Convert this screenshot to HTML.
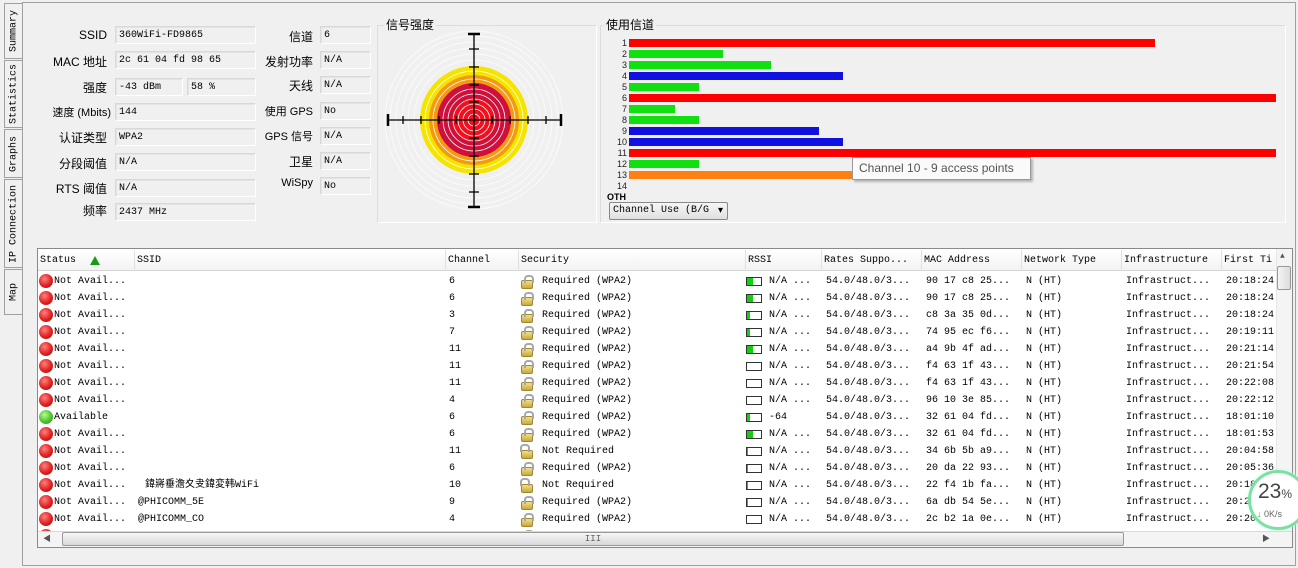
<!DOCTYPE html>
<html><head><meta charset="utf-8"><style>
*{box-sizing:border-box;margin:0;padding:0}
body{width:1298px;height:568px;background:#f0f0f0;position:relative;overflow:hidden;font-family:"Liberation Mono","Noto Sans CJK SC",monospace;font-size:10px;color:#000}
.a{position:absolute}
.tab{position:absolute;left:4px;width:18px;border:1px solid #a0a0a0;border-right:none;background:#f0f0f0}
.tab span{position:absolute;left:50%;top:50%;transform:translate(-50%,-50%) rotate(-90deg);white-space:nowrap;font-size:10px}
.lbl{position:absolute;text-align:right;font-family:"Liberation Sans","Noto Sans CJK SC",sans-serif;font-size:12px;white-space:nowrap}
.fld{position:absolute;height:18px;border:1px solid #fff;border-top-color:#d8d8d8;border-left-color:#d8d8d8;background:#f0f0f0;padding:3px 3px;font-size:10px;line-height:12px;box-shadow:inset 1px 1px 0 #e4e4e4}
.bar{position:absolute;left:629px;height:8px}
.cn{position:absolute;width:24px;text-align:right;font-family:"Liberation Sans",sans-serif;font-size:9px;color:#222}
.hdr{position:absolute;top:250px;height:21px;line-height:21px;font-size:10px;border-right:1px solid #e0e0e0;padding-left:2px;white-space:nowrap}
.row{position:absolute;left:38px;width:1238px;height:17px;font-size:10px;line-height:17px}
.row div{position:absolute;top:0;white-space:nowrap}
.row .dot{width:14px;height:14px;border-radius:50%;top:1px;left:1px;background:radial-gradient(circle at 40% 35%,#ff8080,#e02020 55%,#a01010)}
.row .g{background:radial-gradient(circle at 40% 35%,#b0ff90,#50c030 55%,#309010)}
.row .lock{left:483px;top:7px;width:12px;height:9px;background:linear-gradient(#f4e08a,#c8a840);border:1px solid #a08830;border-radius:2px}
.row .lock::before{content:"";position:absolute;left:2px;top:-6px;width:6px;height:6px;border:2px solid #a8a8a8;border-bottom:none;border-radius:4px 4px 0 0}
.row .lock.o::before{left:-2px;top:-7px}
.row .rs{left:708px;top:4px;width:16px;height:9px;border:1px solid #333;background:#fff}
.rs i{position:absolute;left:0;top:0;bottom:0;background:#10d010}
</style></head><body>
<div class="a" style="left:22px;top:2px;width:1274px;height:564px;border:1px solid #a0a0a0"></div>
<div class="tab" style="top:3px;height:56px"><span>Summary</span></div>
<div class="tab" style="top:60px;height:68px"><span>Statistics</span></div>
<div class="tab" style="top:129px;height:49px"><span>Graphs</span></div>
<div class="tab" style="top:179px;height:89px"><span>IP Connection</span></div>
<div class="tab" style="top:269px;height:46px"><span>Map</span></div>

<div class="lbl" style="left:40px;width:67px;top:28px">SSID</div><div class="fld" style="left:115px;top:26px;width:141px">360WiFi-FD9865</div>
<div class="lbl" style="left:40px;width:67px;top:53px">MAC 地址</div><div class="fld" style="left:115px;top:51px;width:141px">2c 61 04 fd 98 65</div>
<div class="lbl" style="left:40px;width:67px;top:79px">强度</div><div class="fld" style="left:115px;top:78px;width:68px">-43 dBm</div><div class="fld" style="left:187px;top:78px;width:69px">58 %</div>
<div class="lbl" style="left:30px;width:81px;top:104px;font-size:11px">速度 (Mbits)</div><div class="fld" style="left:115px;top:103px;width:141px">144</div>
<div class="lbl" style="left:40px;width:67px;top:129px">认证类型</div><div class="fld" style="left:115px;top:128px;width:141px">WPA2</div>
<div class="lbl" style="left:40px;width:67px;top:155px">分段阈值</div><div class="fld" style="left:115px;top:153px;width:141px">N/A</div>
<div class="lbl" style="left:40px;width:67px;top:180px">RTS 阈值</div><div class="fld" style="left:115px;top:179px;width:141px">N/A</div>
<div class="lbl" style="left:40px;width:67px;top:202px">频率</div><div class="fld" style="left:115px;top:203px;width:141px">2437 MHz</div>

<div class="lbl" style="left:255px;width:58px;top:28px">信道</div><div class="fld" style="left:320px;top:26px;width:51px">6</div>
<div class="lbl" style="left:255px;width:58px;top:53px">发射功率</div><div class="fld" style="left:320px;top:51px;width:51px">N/A</div>
<div class="lbl" style="left:255px;width:58px;top:77px">天线</div><div class="fld" style="left:320px;top:76px;width:51px">N/A</div>
<div class="lbl" style="left:255px;width:58px;top:103px;font-size:11px">使用 GPS</div><div class="fld" style="left:320px;top:102px;width:51px">No</div>
<div class="lbl" style="left:255px;width:58px;top:128px;font-size:11px">GPS 信号</div><div class="fld" style="left:320px;top:127px;width:51px">N/A</div>
<div class="lbl" style="left:255px;width:58px;top:153px">卫星</div><div class="fld" style="left:320px;top:152px;width:51px">N/A</div>
<div class="lbl" style="left:255px;width:58px;top:177px;font-size:11px">WiSpy</div><div class="fld" style="left:320px;top:177px;width:51px">No</div>

<div class="a" style="left:377px;top:25px;width:220px;height:198px;border:1px solid #dcdcdc;border-right-color:#fff;border-bottom-color:#fff"></div>
<div class="a" style="left:384px;top:16px;background:#f0f0f0;padding:0 2px;font-family:'Liberation Sans','Noto Sans CJK SC',sans-serif;font-size:12px">信号强度</div>
<svg class="a" style="left:377px;top:25px" width="220" height="198" viewBox="377 25 220 198">
<g fill="none" stroke="#fafafa" stroke-width="1">
<circle cx="474" cy="120" r="60"/><circle cx="474" cy="120" r="66"/><circle cx="474" cy="120" r="72"/><circle cx="474" cy="120" r="78"/><circle cx="474" cy="120" r="84"/><circle cx="474" cy="120" r="89"/></g>
<circle cx="474" cy="120" r="54" fill="#f5e400"/>
<circle cx="474" cy="120" r="45" fill="#f59a10"/>
<circle cx="474" cy="120" r="37" fill="#d0103c"/>
<circle cx="474" cy="120" r="22" fill="#f01020"/>
<g fill="none" stroke="#fff" stroke-width="0.8">
<circle cx="474" cy="120" r="6"/><circle cx="474" cy="120" r="11"/><circle cx="474" cy="120" r="16"/><circle cx="474" cy="120" r="21"/><circle cx="474" cy="120" r="26"/><circle cx="474" cy="120" r="31"/><circle cx="474" cy="120" r="41"/><circle cx="474" cy="120" r="49"/></g>
<g stroke="#000" stroke-width="1.3">
<line x1="387" y1="120" x2="562" y2="120"/><line x1="474" y1="33" x2="474" y2="208"/>
<line x1="388" y1="114" x2="388" y2="126" stroke-width="2.5"/><line x1="561" y1="114" x2="561" y2="126" stroke-width="2.5"/>
<line x1="468" y1="34" x2="480" y2="34" stroke-width="2.5"/><line x1="468" y1="207" x2="480" y2="207" stroke-width="2.5"/>
<line x1="403" y1="116" x2="403" y2="124"/><line x1="421" y1="116" x2="421" y2="124"/><line x1="439" y1="116" x2="439" y2="124"/><line x1="456" y1="116" x2="456" y2="124"/>
<line x1="492" y1="116" x2="492" y2="124"/><line x1="510" y1="116" x2="510" y2="124"/><line x1="528" y1="116" x2="528" y2="124"/><line x1="546" y1="116" x2="546" y2="124"/>
<line x1="469" y1="49" x2="479" y2="49"/><line x1="469" y1="67" x2="479" y2="67"/><line x1="469" y1="85" x2="479" y2="85"/><line x1="469" y1="102" x2="479" y2="102"/>
<line x1="469" y1="138" x2="479" y2="138"/><line x1="469" y1="156" x2="479" y2="156"/><line x1="469" y1="174" x2="479" y2="174"/><line x1="469" y1="192" x2="479" y2="192"/>
</g></svg>

<div class="a" style="left:600px;top:25px;width:686px;height:198px;border:1px solid #dcdcdc;border-right-color:#fff;border-bottom-color:#fff"></div>
<div class="a" style="left:604px;top:16px;background:#f0f0f0;padding:0 2px;font-family:'Liberation Sans','Noto Sans CJK SC',sans-serif;font-size:12px">使用信道</div>
<div class="cn" style="left:603px;top:38px">1</div><div class="bar" style="top:39px;width:526px;background:#f00"></div>
<div class="cn" style="left:603px;top:49px">2</div><div class="bar" style="top:50px;width:94px;background:#10e010"></div>
<div class="cn" style="left:603px;top:60px">3</div><div class="bar" style="top:61px;width:142px;background:#10e010"></div>
<div class="cn" style="left:603px;top:71px">4</div><div class="bar" style="top:72px;width:214px;background:#1010e0"></div>
<div class="cn" style="left:603px;top:82px">5</div><div class="bar" style="top:83px;width:70px;background:#10e010"></div>
<div class="cn" style="left:603px;top:93px">6</div><div class="bar" style="top:94px;width:647px;background:#f00"></div>
<div class="cn" style="left:603px;top:104px">7</div><div class="bar" style="top:105px;width:46px;background:#10e010"></div>
<div class="cn" style="left:603px;top:115px">8</div><div class="bar" style="top:116px;width:70px;background:#10e010"></div>
<div class="cn" style="left:603px;top:126px">9</div><div class="bar" style="top:127px;width:190px;background:#1010e0"></div>
<div class="cn" style="left:603px;top:137px">10</div><div class="bar" style="top:138px;width:214px;background:#1010e0"></div>
<div class="cn" style="left:603px;top:148px">11</div><div class="bar" style="top:149px;width:647px;background:#f00"></div>
<div class="cn" style="left:603px;top:159px">12</div><div class="bar" style="top:160px;width:70px;background:#10e010"></div>
<div class="cn" style="left:603px;top:170px">13</div><div class="bar" style="top:171px;width:336px;background:#ff8010"></div>
<div class="cn" style="left:603px;top:181px">14</div>
<div class="a" style="left:607px;top:192px;font-family:'Liberation Sans',sans-serif;font-size:9px;font-weight:bold">OTH</div>
<div class="a" style="left:609px;top:202px;width:119px;height:18px;border:1px solid #888;border-radius:2px;background:linear-gradient(#f6f6f6,#e0e0e0);padding:2px 3px;font-size:10px;white-space:nowrap;overflow:hidden">Channel Use (B/G <span style="position:absolute;right:4px;top:2px">▾</span></div>
<div class="a" style="left:852px;top:157px;width:179px;height:23px;background:#fafafa;border:1px solid #999;box-shadow:2px 2px 2px rgba(0,0,0,.25);font-family:'Liberation Sans',sans-serif;font-size:12px;color:#555;line-height:21px;padding-left:6px">Channel 10 - 9 access points</div>

<div class="a" style="left:37px;top:248px;width:1256px;height:300px;border:1px solid #8a8a8a;background:#fff"></div>
<div class="a" style="left:38px;top:249px;width:1238px;height:22px;background:linear-gradient(#fff,#f3f3f3);border-bottom:1px solid #d5d5d5"></div>
<div class="hdr" style="left:38px;width:97px">Status</div>
<div class="a" style="left:90px;top:256px;width:0;height:0;border-left:5px solid transparent;border-right:5px solid transparent;border-bottom:9px solid #1a9a1a"></div>
<div class="hdr" style="left:135px;width:311px">SSID</div>
<div class="hdr" style="left:446px;width:73px">Channel</div>
<div class="hdr" style="left:519px;width:227px">Security</div>
<div class="hdr" style="left:746px;width:76px">RSSI</div>
<div class="hdr" style="left:822px;width:100px">Rates Suppo...</div>
<div class="hdr" style="left:922px;width:100px">MAC Address</div>
<div class="hdr" style="left:1022px;width:100px">Network Type</div>
<div class="hdr" style="left:1122px;width:100px">Infrastructure</div>
<div class="hdr" style="left:1222px;width:54px;overflow:hidden;border:none">First Ti</div>

<div class="a" style="left:38px;top:272px;width:1238px;height:259px;overflow:hidden">
<div style="position:relative;left:-38px;top:-272px">
<div class="row" style="top:273px"><div class="dot"></div><div style="left:16px">Not Avail...</div><div style="left:411px">6</div><div class="lock"></div><div style="left:504px">Required (WPA2)</div><div class="rs"><i style="width:6px"></i></div><div style="left:731px">N/A ...</div><div style="left:788px">54.0/48.0/3...</div><div style="left:888px">90 17 c8 25...</div><div style="left:988px">N (HT)</div><div style="left:1088px">Infrastruct...</div><div style="left:1188px">20:18:24</div></div>
<div class="row" style="top:290px"><div class="dot"></div><div style="left:16px">Not Avail...</div><div style="left:411px">6</div><div class="lock"></div><div style="left:504px">Required (WPA2)</div><div class="rs"><i style="width:6px"></i></div><div style="left:731px">N/A ...</div><div style="left:788px">54.0/48.0/3...</div><div style="left:888px">90 17 c8 25...</div><div style="left:988px">N (HT)</div><div style="left:1088px">Infrastruct...</div><div style="left:1188px">20:18:24</div></div>
<div class="row" style="top:307px"><div class="dot"></div><div style="left:16px">Not Avail...</div><div style="left:411px">3</div><div class="lock"></div><div style="left:504px">Required (WPA2)</div><div class="rs"><i style="width:3px"></i></div><div style="left:731px">N/A ...</div><div style="left:788px">54.0/48.0/3...</div><div style="left:888px">c8 3a 35 0d...</div><div style="left:988px">N (HT)</div><div style="left:1088px">Infrastruct...</div><div style="left:1188px">20:18:24</div></div>
<div class="row" style="top:324px"><div class="dot"></div><div style="left:16px">Not Avail...</div><div style="left:411px">7</div><div class="lock"></div><div style="left:504px">Required (WPA2)</div><div class="rs"><i style="width:3px"></i></div><div style="left:731px">N/A ...</div><div style="left:788px">54.0/48.0/3...</div><div style="left:888px">74 95 ec f6...</div><div style="left:988px">N (HT)</div><div style="left:1088px">Infrastruct...</div><div style="left:1188px">20:19:11</div></div>
<div class="row" style="top:341px"><div class="dot"></div><div style="left:16px">Not Avail...</div><div style="left:411px">11</div><div class="lock"></div><div style="left:504px">Required (WPA2)</div><div class="rs"><i style="width:6px"></i></div><div style="left:731px">N/A ...</div><div style="left:788px">54.0/48.0/3...</div><div style="left:888px">a4 9b 4f ad...</div><div style="left:988px">N (HT)</div><div style="left:1088px">Infrastruct...</div><div style="left:1188px">20:21:14</div></div>
<div class="row" style="top:358px"><div class="dot"></div><div style="left:16px">Not Avail...</div><div style="left:411px">11</div><div class="lock"></div><div style="left:504px">Required (WPA2)</div><div class="rs"></div><div style="left:731px">N/A ...</div><div style="left:788px">54.0/48.0/3...</div><div style="left:888px">f4 63 1f 43...</div><div style="left:988px">N (HT)</div><div style="left:1088px">Infrastruct...</div><div style="left:1188px">20:21:54</div></div>
<div class="row" style="top:375px"><div class="dot"></div><div style="left:16px">Not Avail...</div><div style="left:411px">11</div><div class="lock"></div><div style="left:504px">Required (WPA2)</div><div class="rs"></div><div style="left:731px">N/A ...</div><div style="left:788px">54.0/48.0/3...</div><div style="left:888px">f4 63 1f 43...</div><div style="left:988px">N (HT)</div><div style="left:1088px">Infrastruct...</div><div style="left:1188px">20:22:08</div></div>
<div class="row" style="top:392px"><div class="dot"></div><div style="left:16px">Not Avail...</div><div style="left:411px">4</div><div class="lock"></div><div style="left:504px">Required (WPA2)</div><div class="rs"></div><div style="left:731px">N/A ...</div><div style="left:788px">54.0/48.0/3...</div><div style="left:888px">96 10 3e 85...</div><div style="left:988px">N (HT)</div><div style="left:1088px">Infrastruct...</div><div style="left:1188px">20:22:12</div></div>
<div class="row" style="top:409px"><div class="dot g"></div><div style="left:16px">Available</div><div style="left:411px">6</div><div class="lock"></div><div style="left:504px">Required (WPA2)</div><div class="rs"><i style="width:3px"></i></div><div style="left:731px">-64</div><div style="left:788px">54.0/48.0/3...</div><div style="left:888px">32 61 04 fd...</div><div style="left:988px">N (HT)</div><div style="left:1088px">Infrastruct...</div><div style="left:1188px">18:01:10</div></div>
<div class="row" style="top:426px"><div class="dot"></div><div style="left:16px">Not Avail...</div><div style="left:411px">6</div><div class="lock"></div><div style="left:504px">Required (WPA2)</div><div class="rs"><i style="width:6px"></i></div><div style="left:731px">N/A ...</div><div style="left:788px">54.0/48.0/3...</div><div style="left:888px">32 61 04 fd...</div><div style="left:988px">N (HT)</div><div style="left:1088px">Infrastruct...</div><div style="left:1188px">18:01:53</div></div>
<div class="row" style="top:443px"><div class="dot"></div><div style="left:16px">Not Avail...</div><div style="left:411px">11</div><div class="lock o"></div><div style="left:504px">Not Required</div><div class="rs"><i style="width:1px"></i></div><div style="left:731px">N/A ...</div><div style="left:788px">54.0/48.0/3...</div><div style="left:888px">34 6b 5b a9...</div><div style="left:988px">N (HT)</div><div style="left:1088px">Infrastruct...</div><div style="left:1188px">20:04:58</div></div>
<div class="row" style="top:460px"><div class="dot"></div><div style="left:16px">Not Avail...</div><div style="left:411px">6</div><div class="lock"></div><div style="left:504px">Required (WPA2)</div><div class="rs"><i style="width:1px"></i></div><div style="left:731px">N/A ...</div><div style="left:788px">54.0/48.0/3...</div><div style="left:888px">20 da 22 93...</div><div style="left:988px">N (HT)</div><div style="left:1088px">Infrastruct...</div><div style="left:1188px">20:05:36</div></div>
<div class="row" style="top:477px"><div class="dot"></div><div style="left:16px">Not Avail...</div><div style="left:107px">鍏嶈垂澹夊叏鍏変韩WiFi</div><div style="left:411px">10</div><div class="lock o"></div><div style="left:504px">Not Required</div><div class="rs"><i style="width:1px"></i></div><div style="left:731px">N/A ...</div><div style="left:788px">54.0/48.0/3...</div><div style="left:888px">22 f4 1b fa...</div><div style="left:988px">N (HT)</div><div style="left:1088px">Infrastruct...</div><div style="left:1188px">20:18:24</div></div>
<div class="row" style="top:494px"><div class="dot"></div><div style="left:16px">Not Avail...</div><div style="left:100px">@PHICOMM_5E</div><div style="left:411px">9</div><div class="lock"></div><div style="left:504px">Required (WPA2)</div><div class="rs"><i style="width:1px"></i></div><div style="left:731px">N/A ...</div><div style="left:788px">54.0/48.0/3...</div><div style="left:888px">6a db 54 5e...</div><div style="left:988px">N (HT)</div><div style="left:1088px">Infrastruct...</div><div style="left:1188px">20:20:24</div></div>
<div class="row" style="top:511px"><div class="dot"></div><div style="left:16px">Not Avail...</div><div style="left:100px">@PHICOMM_CO</div><div style="left:411px">4</div><div class="lock"></div><div style="left:504px">Required (WPA2)</div><div class="rs"></div><div style="left:731px">N/A ...</div><div style="left:788px">54.0/48.0/3...</div><div style="left:888px">2c b2 1a 0e...</div><div style="left:988px">N (HT)</div><div style="left:1088px">Infrastruct...</div><div style="left:1188px">20:20:24</div></div>
<div class="row" style="top:528px"><div class="dot"></div><div class="lock"></div><div class="rs"></div></div>
</div></div>

<div class="a" style="left:1276px;top:249px;width:16px;height:282px;background:#f4f4f4;border-left:1px solid #e6e6e6"></div>
<div class="a" style="left:1280px;top:252px;font-size:8px;color:#555">▲</div>
<div class="a" style="left:1277px;top:266px;width:14px;height:24px;border:1px solid #999;border-radius:2px;background:linear-gradient(90deg,#f4f4f4,#dcdcdc)"></div>
<div class="a" style="left:38px;top:531px;width:1254px;height:16px;background:#f4f4f4;border-top:1px solid #d8d8d8"></div>
<div class="a" style="left:43px;top:533px;font-size:8px;color:#555">◀</div>
<div class="a" style="left:62px;top:532px;width:1062px;height:14px;border:1px solid #999;border-radius:2px;background:linear-gradient(#f6f6f6,#d8d8d8);text-align:center;font-size:9px;line-height:12px;color:#666">III</div>
<div class="a" style="left:1262px;top:533px;font-size:8px;color:#555">▶</div>

<div class="a" style="left:1248px;top:470px;width:60px;height:60px;border-radius:50%;background:#fff;border:3px solid #7ee0a0;box-shadow:0 0 3px #bfe"></div>
<div class="a" style="left:1258px;top:480px;font-family:'Liberation Sans',sans-serif;font-size:21px;color:#444">23<span style="font-size:12px">%</span></div>
<div class="a" style="left:1257px;top:509px;font-family:'Liberation Sans',sans-serif;font-size:9px;color:#666"><span style="color:#2a4">↓</span> 0K/s</div>
</body></html>
